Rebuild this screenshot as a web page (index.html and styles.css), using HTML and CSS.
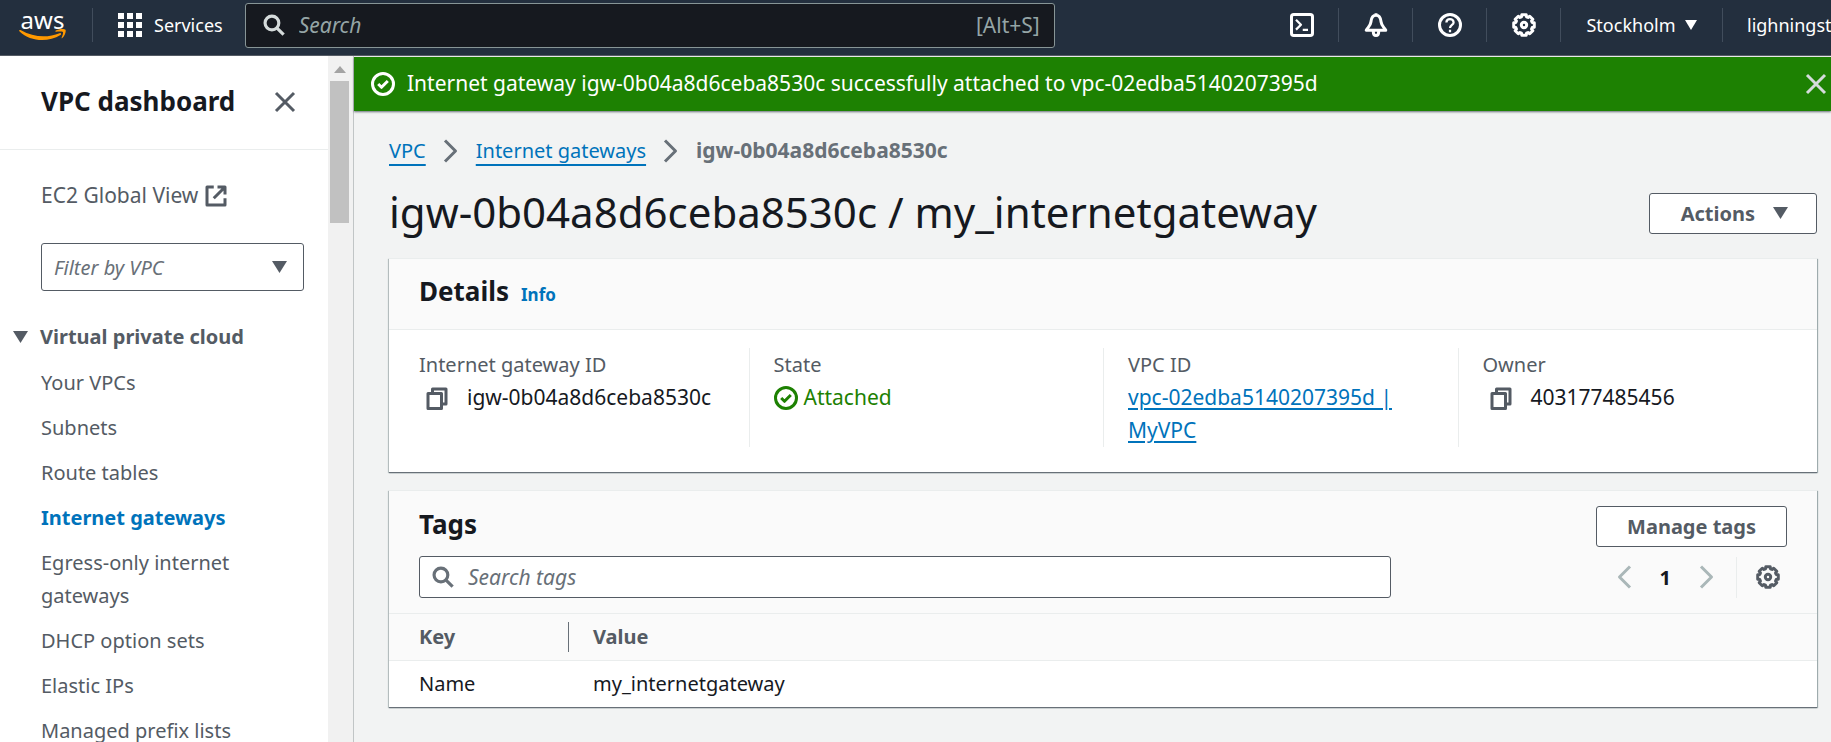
FILE: index.html
```html
<!DOCTYPE html>
<html lang="en">
<head>
<meta charset="utf-8">
<meta name="viewport" content="width=device-width, initial-scale=1">
<title>Internet gateways | VPC Console</title>
<link rel="stylesheet" href="styles.css">
</head>
<body>
<svg class="defs" aria-hidden="true">
  <symbol id="i-search" viewBox="0 0 16 16"><circle cx="6.5" cy="6.5" r="5"/><path d="M10.2 10.2 15 15"/></symbol>
  <symbol id="i-gear" viewBox="-8 -8 16 16"><path d="M6.85-1.46V1.46L5.45 1.67 5.03 2.68 5.87 3.81 3.81 5.87 2.68 5.03 1.67 5.45 1.46 6.85H-1.46L-1.67 5.45-2.68 5.03-3.81 5.87-5.87 3.81-5.03 2.68-5.45 1.67-6.85 1.46V-1.46L-5.45-1.67-5.03-2.68-5.87-3.81-3.81-5.87-2.68-5.03-1.67-5.45-1.46-6.85H1.46L1.67-5.45 2.68-5.03 3.81-5.87 5.87-3.81 5.03-2.68 5.45-1.67Z"/><circle r="1.8"/></symbol>
  <symbol id="i-check" viewBox="0 0 16 16"><circle cx="8" cy="8" r="7"/><path d="m4.8 8 2.2 2.2L11.2 6"/></symbol>
  <symbol id="i-close" viewBox="0 0 16 16"><path d="m2 2 12 12M14 2 2 14"/></symbol>
  <symbol id="i-copy" viewBox="0 0 16 16"><path d="M2 5h9v10H2zM5 5V2h9v10h-3"/></symbol>
  <symbol id="i-right" viewBox="0 0 16 16"><path d="m4 1 7 7-7 7"/></symbol>
  <symbol id="i-left" viewBox="0 0 16 16"><path d="M12 1 5 8l7 7"/></symbol>
</svg>

<header class="topnav">
  <a class="logo" href="#" aria-label="AWS home"><span class="logo-text">aws</span>
    <svg class="logo-smile" viewBox="0 0 47 12" aria-hidden="true"><path d="M.3 1.2C.8.8 1.4 1 2 1.3 14.500 8.500 29 9 40.500 4.200c1.500-.6 2.300.8 1 1.700C29 13.600 11 12.500.6 2.400.1 1.900 0 1.500.3 1.200Z"/><path d="M36.500 1.800C39.500-.3 45.500-.4 46.500.8c.8 1.100-.5 6.200-3.200 8.300-.5.400-.9.200-.7-.3.700-1.700 1.900-4.800 1.300-5.700-.6-.8-4.400-.6-6.700-.4-.8.100-1.200-.5-.7-.9Z"/></svg>
  </a>
  <button class="services" type="button">
    <svg class="grid-icon" viewBox="0 0 24 24" aria-hidden="true"><path d="M0 0h6v6H0zM9 0h6v6H9zM18 0h6v6h-6zM0 9h6v6H0zM9 9h6v6H9zM18 9h6v6h-6zM0 18h6v6H0zM9 18h6v6H9zM18 18h6v6h-6z"/></svg>
    Services
  </button>
  <label class="global-search">
    <svg class="icon icon-s"><use href="#i-search"/></svg>
    <input type="search" placeholder="Search" aria-label="Search services">
    <span class="hint">[Alt+S]</span>
  </label>
  <nav class="utilities" aria-label="Account utilities">
    <button type="button" aria-label="CloudShell"><svg class="icon" viewBox="0 0 16 16"><rect x="1" y="1" width="14" height="14" rx="1.500"/><path class="thin" d="m4 4.500 3.300 3.300L4 11.100M8.500 11.200H12"/></svg></button>
    <button type="button" aria-label="Notifications"><svg class="icon" viewBox="0 0 16 16"><path d="M8 1.500C5.400 1.500 4.800 4 4.600 6 4.300 8.700 2.500 9.600 1.500 11.500h13C13.500 9.600 11.700 8.700 11.400 6 11.200 4 10.600 1.500 8 1.500ZM8 .2v1.500M6.200 12.500c0 3.300 3.600 3.300 3.600 0"/></svg></button>
    <button type="button" aria-label="Help"><svg class="icon" viewBox="0 0 16 16"><circle cx="8" cy="8" r="7"/><path class="thin" d="M5.600 6.300c0-3 4.800-3 4.800 0C10.400 7.900 8 8 8 10M8 11.200v1.600"/></svg></button>
    <button type="button" aria-label="Settings"><svg class="icon"><use href="#i-gear"/></svg></button>
    <button class="region" type="button">Stockholm <svg class="caret" viewBox="0 0 12 10"><path d="M0 0h12L6 10z"/></svg></button>
    <button class="account" type="button">lighningst</button>
  </nav>
</header>

<div class="shell">
  <aside class="sidebar">
    <div class="side-scroll">
      <div class="side-head">
        <h2>VPC dashboard</h2>
        <button class="plain" type="button" aria-label="Close navigation"><svg class="icon"><use href="#i-close"/></svg></button>
      </div>
      <div class="side-body">
        <a class="external" href="#">EC2 Global View <svg class="icon" viewBox="0 0 16 16" aria-hidden="true"><path d="M6.500 2H2v12h12V9.500M9 2h5v5M14 2 6.500 9.500"/></svg></a>
        <div class="select-wrap">
          <select aria-label="Filter by VPC"><option>Filter by VPC</option></select>
          <svg class="caret-lg" viewBox="0 0 15 12"><path d="M0 0h15L7.500 12z"/></svg>
        </div>
        <button class="group" type="button" aria-expanded="true"><svg class="caret-lg" viewBox="0 0 15 12"><path d="M0 0h15L7.500 12z"/></svg>Virtual private cloud</button>
        <ul class="side-links">
          <li><a href="#">Your VPCs</a></li>
          <li><a href="#">Subnets</a></li>
          <li><a href="#">Route tables</a></li>
          <li><a class="active" href="#" aria-current="page">Internet gateways</a></li>
          <li><a href="#">Egress-only internet gateways</a></li>
          <li><a href="#">DHCP option sets</a></li>
          <li><a href="#">Elastic IPs</a></li>
          <li><a href="#">Managed prefix lists</a></li>
        </ul>
      </div>
    </div>
    <div class="scrollbar" aria-hidden="true"><svg viewBox="0 0 12 7"><path d="M0 7h12L6 0z"/></svg><div class="thumb"></div></div>
  </aside>

  <div class="content">
    <div class="flash" role="status">
      <svg class="icon"><use href="#i-check"/></svg>
      <span class="flash-text">Internet gateway igw-0b04a8d6ceba8530c successfully attached to vpc-02edba5140207395d</span>
      <button class="plain" type="button" aria-label="Dismiss"><svg class="icon"><use href="#i-close"/></svg></button>
    </div>
    <main class="page">
      <nav class="crumbs" aria-label="Breadcrumbs">
        <a href="#">VPC</a><svg class="icon"><use href="#i-right"/></svg>
        <a href="#">Internet gateways</a><svg class="icon"><use href="#i-right"/></svg>
        <span class="current">igw-0b04a8d6ceba8530c</span>
      </nav>
      <div class="title-row">
        <h1>igw-0b04a8d6ceba8530c / my_internetgateway</h1>
        <button class="btn actions" type="button">Actions <svg class="caret-lg" viewBox="0 0 15 12"><path d="M0 0h15L7.500 12z"/></svg></button>
      </div>

      <section class="card">
        <div class="card-head"><h2>Details</h2><a class="info" href="#">Info</a></div>
        <dl class="fields">
          <div class="field"><dt>Internet gateway ID</dt><dd class="copyable"><button class="plain" type="button" aria-label="Copy gateway ID"><svg class="icon"><use href="#i-copy"/></svg></button>igw-0b04a8d6ceba8530c</dd></div>
          <div class="field"><dt>State</dt><dd class="status"><svg class="icon"><use href="#i-check"/></svg>Attached</dd></div>
          <div class="field"><dt>VPC ID</dt><dd><a class="vpc-link" href="#">vpc-02edba5140207395d | MyVPC</a></dd></div>
          <div class="field"><dt>Owner</dt><dd class="copyable"><button class="plain" type="button" aria-label="Copy owner"><svg class="icon"><use href="#i-copy"/></svg></button>403177485456</dd></div>
        </dl>
      </section>

      <section class="card">
        <div class="tags-head">
          <h2>Tags</h2>
          <button class="btn manage" type="button">Manage tags</button>
          <label class="tag-search">
            <svg class="icon icon-s"><use href="#i-search"/></svg>
            <input type="search" placeholder="Search tags" aria-label="Search tags">
          </label>
          <div class="pager">
            <button class="plain dim" type="button" aria-label="Previous page"><svg class="icon"><use href="#i-left"/></svg></button>
            <button class="plain page-no" type="button">1</button>
            <button class="plain dim" type="button" aria-label="Next page"><svg class="icon"><use href="#i-right"/></svg></button>
            <button class="plain prefs" type="button" aria-label="Preferences"><svg class="icon"><use href="#i-gear"/></svg></button>
          </div>
        </div>
        <table class="tags">
          <thead><tr><th class="key" scope="col"><div class="key-label">Key</div></th><th scope="col">Value</th></tr></thead>
          <tbody><tr><td>Name</td><td>my_internetgateway</td></tr></tbody>
        </table>
      </section>
    </main>
  </div>
</div>
</body>
</html>
```

FILE: styles.css
```css
* { box-sizing: border-box; }

body {
  margin: 0;
  height: 100vh;
  display: flex;
  flex-direction: column;
  overflow: hidden;
  font-family: "Noto Sans", "Open Sans", sans-serif;
  font-size: 20px;
  line-height: 33px;
  color: #16191f;
  background: #f2f3f3;
}

h1, h2, dl, dd, ul { margin: 0; padding: 0; }
button, input, select { font: inherit; color: inherit; }
button { cursor: pointer; }
a { color: #0073bb; }
.defs { position: absolute; width: 0; height: 0; }

.icon {
  flex: none;
  display: block;
  width: 24px;
  height: 24px;
  fill: none;
  stroke: currentColor;
  stroke-width: 2;
  stroke-linejoin: round;
  overflow: visible;
}
.icon-s { width: 22px; height: 22px; stroke-width: 2.3; }
.thin { stroke-width: 1.5; }
.caret { width: 12px; height: 10px; fill: currentColor; }
.caret-lg { flex: none; width: 15px; height: 12px; fill: #545b64; }
.plain { display: flex; padding: 0; border: 0; background: none; color: #545b64; }

/* Top navigation */
.topnav {
  flex: none;
  display: flex;
  align-items: center;
  height: 56px;
  padding: 0 0 5px 19px;
  background: #232f3e;
  border-bottom: 1px solid #545b64;
  color: #fff;
  font-size: 18px;
  overflow: hidden;
}
.logo { flex: none; display: flex; flex-direction: column; align-items: center; width: 47px; color: #fff; text-decoration: none; }
.logo-text { font-size: 24px; line-height: 19px; }
.logo-smile { width: 47px; height: 12px; fill: #f90; }
.services {
  flex: none;
  display: flex;
  align-items: center;
  gap: 12px;
  height: 34px;
  margin-left: 26px;
  padding: 0 22px 0 25px;
  border: 0;
  border-left: 1px solid #414d5c;
  background: none;
}
.grid-icon { width: 24px; height: 24px; fill: #fff; }
.global-search {
  flex: none;
  display: flex;
  align-items: center;
  gap: 14px;
  width: 810px;
  height: 45px;
  padding: 0 14px 0 17px;
  border: 1px solid #879596;
  border-radius: 3px;
  background: #16191f;
  color: #d5dbdb;
  font-size: 21px;
}
.global-search input, .tag-search input { flex: 1; min-width: 0; padding: 0; border: 0; outline: 0; background: none; }
.global-search input::placeholder { color: #95a5a6; opacity: 1; font-style: italic; }
.hint { color: #95a5a6; }
.utilities { flex: none; display: flex; align-items: center; margin-left: auto; }
.utilities button {
  flex: none;
  display: flex;
  align-items: center;
  justify-content: center;
  gap: 9px;
  width: 74px;
  height: 34px;
  padding: 0;
  border: 0;
  border-right: 1px solid #414d5c;
  background: none;
}
.utilities .region { width: 162px; }
.utilities .account { width: 108px; padding-left: 24px; border: 0; justify-content: flex-start; }

/* Side navigation */
.shell { flex: 1; display: flex; min-height: 0; }
.sidebar { flex: none; display: flex; width: 354px; border-right: 1px solid #c1c5c6; background: #fff; }
.side-scroll { flex: 1; overflow: hidden; color: #545b64; }
.side-head {
  display: flex;
  align-items: center;
  justify-content: space-between;
  height: 94px;
  padding: 0 31px 2px 41px;
  border-bottom: 1px solid #eaeded;
}
.side-head h2 { font-size: 26px; color: #16191f; }
.side-body { padding: 29px 24px 0 41px; }
.side-body a { color: #545b64; text-decoration: none; }
.side-body .external { display: flex; align-items: center; gap: 6px; font-size: 21px; }
.select-wrap { display: grid; align-items: center; margin-top: 31px; }
.select-wrap > * { grid-area: 1 / 1; }
.select-wrap .caret-lg { justify-self: end; margin-right: 17px; pointer-events: none; }
.select-wrap select {
  appearance: none;
  width: 100%;
  height: 48px;
  padding: 0 12px;
  border: 1px solid #545b64;
  border-radius: 3px;
  background: #fff;
  color: #687078;
  font-style: italic;
}
.group {
  display: flex;
  align-items: center;
  gap: 12px;
  margin: 29px 0 13px -28px;
  padding: 0;
  border: 0;
  background: none;
  font-weight: 700;
}
.side-links { display: grid; gap: 12px; list-style: none; }
.side-links .active { color: #0073bb; font-weight: 700; }
.scrollbar { flex: none; width: 25px; padding: 10px 4px 0 2px; background: #f1f1f1; }
.scrollbar svg { display: block; width: 12px; height: 7px; margin: 0 auto 8px; fill: #a3a3a3; }
.thumb { height: 142px; background: #c1c1c1; }

/* Content */
.content { flex: 1; min-width: 0; padding-top: 1px; }
.flash {
  display: flex;
  align-items: center;
  gap: 12px;
  height: 54px;
  padding: 0 3px 1px 17px;
  background: #1d8102;
  color: #fff;
  font-size: 21px;
  box-shadow: 0 1px 2px #687078;
}
.flash-text { flex: 1; }
.flash .plain { color: #d5dbdb; }
.page { padding: 23px 14px 0 35px; }
.crumbs { display: flex; align-items: center; gap: 13px; color: #687078; }
.crumbs a, .vpc-link { text-decoration-thickness: 2px; text-underline-offset: 3px; }
.crumbs a { text-underline-offset: 6px; text-decoration-skip-ink: none; }
.current { font-size: 21px; font-weight: 700; }
.title-row { display: flex; align-items: center; justify-content: space-between; height: 60px; margin: 16px 0 15px; }
h1 { padding-bottom: 4px; font-size: 42px; font-weight: 400; }
.btn {
  display: flex;
  align-items: center;
  justify-content: center;
  height: 41px;
  padding: 0 30px;
  border: 1px solid #545b64;
  border-radius: 3px;
  background: #fff;
  color: #545b64;
  font-weight: 700;
}
.actions { gap: 18px; padding: 0 28px 0 31px; }

.card {
  margin-bottom: 18px;
  background: #fff;
  border-top: 1px solid #eaeded;
  box-shadow: 0 1px 1px #687078, 1px 1px 1px #aab7b8, -1px 1px 1px #c5cccc;
}
.card h2 { font-size: 26px; }
.card-head { display: flex; align-items: baseline; gap: 12px; height: 71px; padding: 16px 30px 0; background: #fafafa; border-bottom: 1px solid #eaeded; }
.info { font-size: 17px; font-weight: 700; text-decoration: none; }
.fields { display: grid; grid-template-columns: repeat(4, 1fr); gap: 50px; padding: 18px 30px 25px; }
.field + .field { margin-left: -25px; padding-left: 24px; border-left: 1px solid #eaeded; }
dt { color: #545b64; }
dd { font-size: 21px; }
.copyable, .status { display: flex; align-items: center; }
.copyable { gap: 18px; padding-left: 6px; }
.status { gap: 6px; color: #1d8102; }

.tags-head {
  display: grid;
  grid-template-columns: minmax(0, 972px) auto;
  justify-content: space-between;
  align-items: center;
  row-gap: 9px;
  padding: 15px 30px 15px;
  background: #fafafa;
  border-bottom: 1px solid #eaeded;
}
.tags-head h2 { padding-bottom: 5px; }
.manage { justify-self: end; }
.tag-search {
  display: flex;
  align-items: center;
  gap: 14px;
  height: 42px;
  padding: 0 12px;
  border: 1px solid #545b64;
  border-radius: 3px;
  background: #fff;
  color: #687078;
  font-size: 21px;
}
.tag-search input::placeholder { color: #687078; opacity: 1; font-style: italic; }
.pager { justify-self: end; display: flex; align-items: center; gap: 17px; }
.pager .dim { color: #aab7b8; }
.pager .page-no { padding: 0 7px; color: #16191f; font-weight: 700; }
.pager .prefs { align-items: center; height: 41px; padding: 0 7px 0 19px; border-left: 1px solid #eaeded; }

.tags { width: 100%; border-collapse: collapse; text-align: left; }
.tags th { height: 46px; padding: 0 0 0 24px; background: #fafafa; border-bottom: 1px solid #eaeded; color: #545b64; }
.tags td { height: 47px; padding: 0 0 0 24px; }
.tags .key { width: 180px; padding: 0; }
.tags td:first-child { padding-left: 30px; }
.key-label { height: 30px; padding-left: 30px; border-right: 1px solid #687078; line-height: 30px; }
```
